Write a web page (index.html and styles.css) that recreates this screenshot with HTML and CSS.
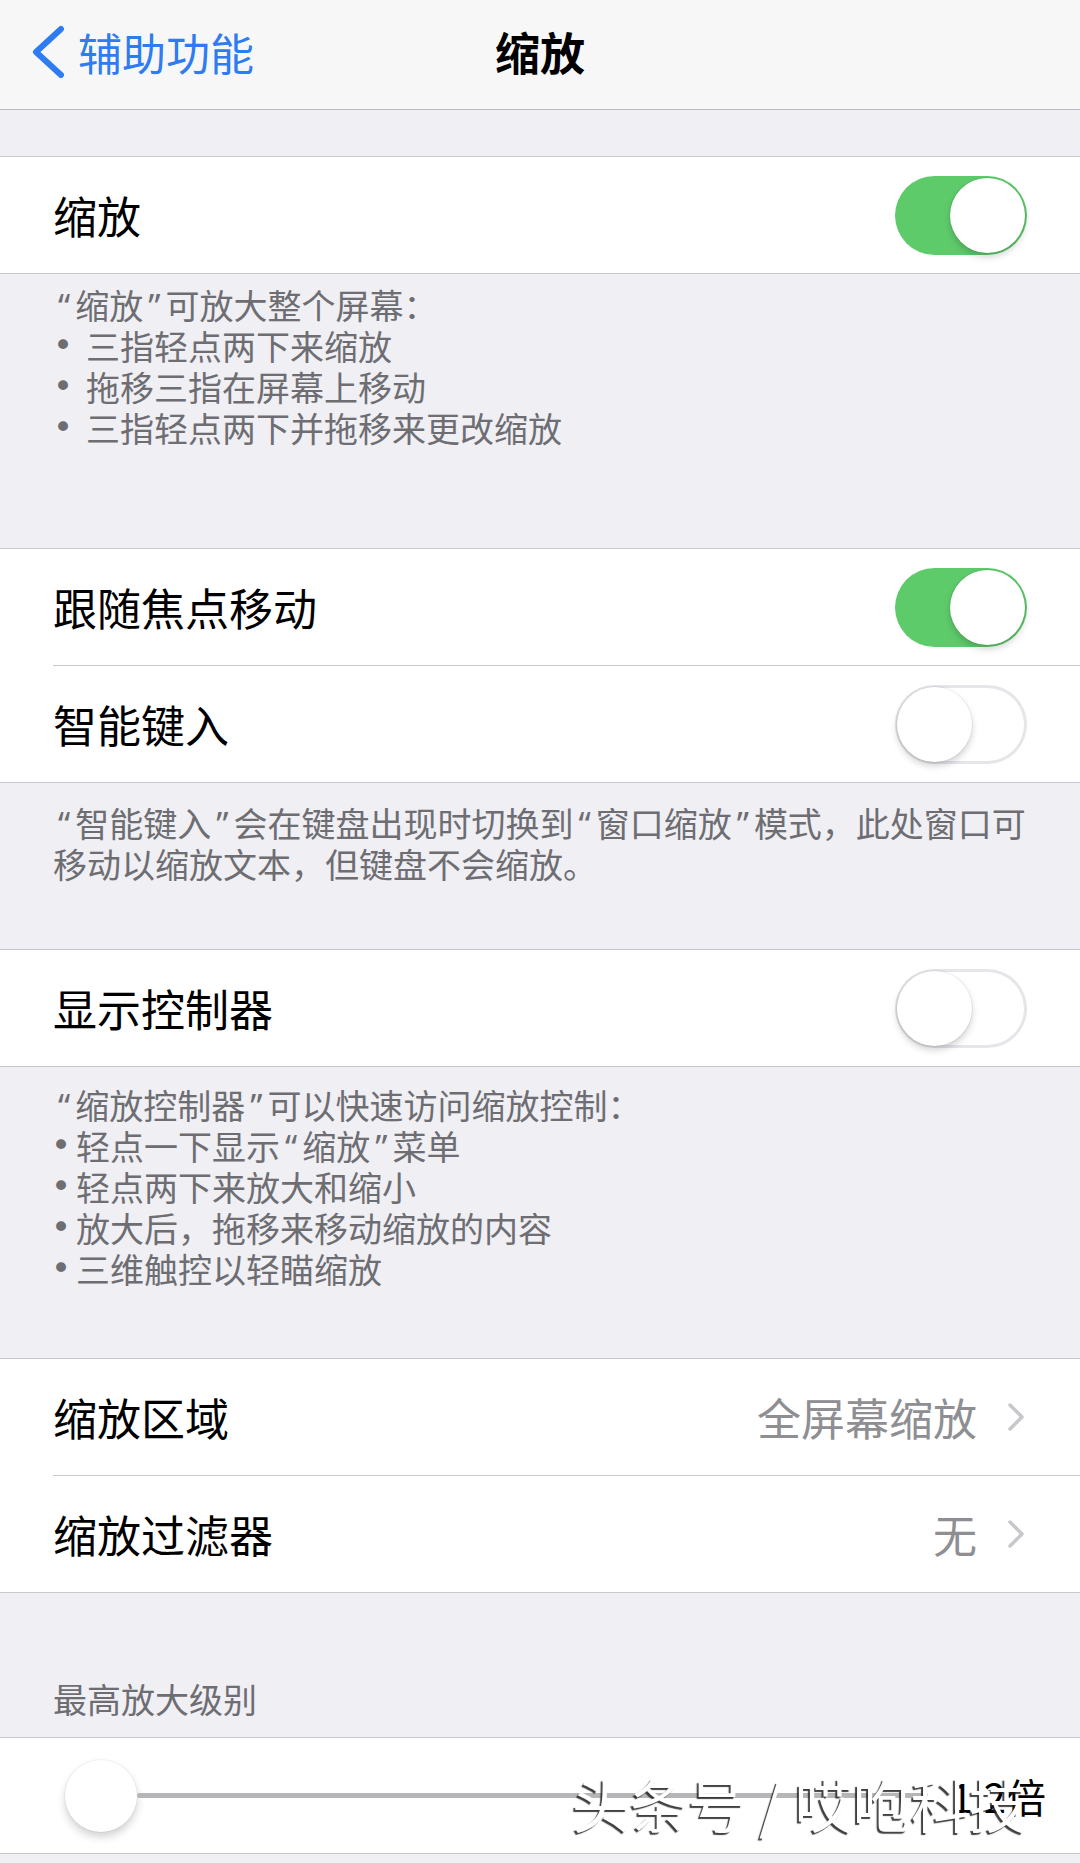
FILE: index.html
```html
<!DOCTYPE html>
<html lang="zh-CN">
<head>
<meta charset="utf-8">
<title>缩放</title>
<link rel="stylesheet" href="styles.css">
</head>
<body>
<div class="page">
  <header class="nav">
    <div class="nav-back">
      <svg viewBox="0 0 36 54" class="back-chevron"><polyline points="31,4 6,27 31,50" fill="none" stroke="#2f7cf2" stroke-width="6" stroke-linecap="round" stroke-linejoin="round"/></svg>
      <span>辅助功能</span>
    </div>
    <div class="nav-title">缩放</div>
    <div></div>
  </header>
  <div class="gap-top"></div>

  <section class="group">
    <div class="row"><span class="label">缩放</span><span class="toggle on"></span></div>
  </section>
  <div class="footer f1">
    <p><span class="q">“</span>缩放<span class="q">”</span>可放大整个屏幕：</p>
    <div class="bl wide"><span class="dot">•</span><span>三指轻点两下来缩放</span></div>
    <div class="bl wide"><span class="dot">•</span><span>拖移三指在屏幕上移动</span></div>
    <div class="bl wide"><span class="dot">•</span><span>三指轻点两下并拖移来更改缩放</span></div>
  </div>

  <section class="group">
    <div class="row"><span class="label">跟随焦点移动</span><span class="toggle on"></span></div>
    <div class="row"><span class="label">智能键入</span><span class="toggle off"></span></div>
  </section>
  <div class="footer f2">
    <p class="nowrap"><span class="q">“</span>智能键入<span class="q">”</span>会在键盘出现时切换到<span class="q">“</span>窗口缩放<span class="q">”</span>模式，此处窗口可<br>移动以缩放文本，但键盘不会缩放。</p>
  </div>

  <section class="group">
    <div class="row"><span class="label">显示控制器</span><span class="toggle off"></span></div>
  </section>
  <div class="footer f3">
    <p><span class="q">“</span>缩放控制器<span class="q">”</span>可以快速访问缩放控制：</p>
    <div class="bl narrow"><span class="dot">•</span><span>轻点一下显示<span class="q">“</span>缩放<span class="q">”</span>菜单</span></div>
    <div class="bl narrow"><span class="dot">•</span><span>轻点两下来放大和缩小</span></div>
    <div class="bl narrow"><span class="dot">•</span><span>放大后，拖移来移动缩放的内容</span></div>
    <div class="bl narrow"><span class="dot">•</span><span>三维触控以轻瞄缩放</span></div>
  </div>

  <section class="group">
    <div class="row">
      <span class="label">缩放区域</span>
      <span class="value">全屏幕缩放<svg class="chev" viewBox="0 0 18 30"><polyline points="3,3 15,15 3,27" fill="none" stroke="#c7c7cc" stroke-width="3.5" stroke-linecap="round" stroke-linejoin="round"/></svg></span>
    </div>
    <div class="row">
      <span class="label">缩放过滤器</span>
      <span class="value">无<svg class="chev" viewBox="0 0 18 30"><polyline points="3,3 15,15 3,27" fill="none" stroke="#c7c7cc" stroke-width="3.5" stroke-linecap="round" stroke-linejoin="round"/></svg></span>
    </div>
  </section>

  <div class="section-header">最高放大级别</div>
  <section class="group">
    <div class="row slider-row">
      <span class="thumb"></span>
      <span class="track"></span>
      <span class="slider-value">1.2倍</span>
    </div>
  </section>

  <div class="watermark">头条号 / 哎咆科技</div>
</div>
</body>
</html>
```

FILE: styles.css
```css
html, body {
  margin: 0;
  padding: 0;
}
body {
  background: #efeff4;
  font-family: "Noto Sans CJK SC", "Noto Sans", sans-serif;
}
.page {
  position: relative;
  width: 1080px;
  height: 1863px;
  overflow: hidden;
  background: #efeff4;
}

/* nav bar */
.nav {
  height: 109px;
  border-bottom: 1px solid #b9b9bd;
  background: #f7f7f8;
  display: grid;
  grid-template-columns: 1fr auto 1fr;
  align-items: center;
}
.nav-back {
  display: flex;
  align-items: center;
  gap: 12px;
  padding-left: 30px;
  color: #2f7cf2;
  font-size: 44px;
  line-height: 1;
  margin-top: -6px;
}
.back-chevron {
  width: 36px;
  height: 54px;
  flex: none;
}
.nav-title {
  font-size: 45px;
  font-weight: 600;
  color: #000;
  line-height: 1;
  margin-top: -6px;
}
.gap-top {
  height: 46px;
}

/* groups & rows */
.group {
  background: #fff;
  border-top: 1px solid #c8c7cc;
  border-bottom: 1px solid #c8c7cc;
  padding-left: 53px;
}
.row {
  height: 116px;
  display: flex;
  align-items: center;
  justify-content: space-between;
  padding-right: 53px;
}
.row + .row {
  border-top: 1px solid #c8c7cc;
}
.label {
  font-size: 44px;
  color: #000;
  line-height: 1;
}

/* switches */
.toggle {
  position: relative;
  width: 132px;
  height: 79px;
  border-radius: 40px;
  box-sizing: border-box;
  flex: none;
}
.toggle.on {
  background: #5ecb6b;
}
.toggle.off {
  background: #fff;
  box-shadow: inset 0 0 0 3px #e5e5ea;
}
.toggle::after {
  content: "";
  position: absolute;
  top: 2px;
  width: 75px;
  height: 75px;
  border-radius: 50%;
  background: #fff;
  box-shadow: 0 4px 7px rgba(0, 0, 0, 0.18), 0 0 0 1px rgba(0, 0, 0, 0.05);
}
.toggle.on::after {
  right: 2px;
}
.toggle.off::after {
  left: 2px;
}

/* value + chevron */
.value {
  display: flex;
  align-items: center;
  gap: 30px;
  color: #8e8e93;
  font-size: 44px;
  line-height: 1;
}
.chev {
  width: 18px;
  height: 30px;
  flex: none;
  margin-right: 2px;
}

/* footers */
.footer {
  padding-left: 53px;
  padding-right: 53px;
  font-size: 34px;
  line-height: 41px;
  color: #6d6d72;
}
.footer p {
  margin: 0;
}
.q {
  font-family: "Noto Sans", "DejaVu Sans", sans-serif;
  padding: 0 5px;
  line-height: 0;
}
.f1 {
  padding-top: 10px;
  padding-bottom: 100px;
}
.f2 {
  padding-top: 19px;
  padding-bottom: 65px;
}
.f3 {
  padding-top: 17px;
  padding-bottom: 69px;
}
.nowrap {
  white-space: nowrap;
}
.bl {
  display: flex;
  height: 41px;
}
.bl .dot {
  flex: none;
  font-family: "DejaVu Sans", "Noto Sans", sans-serif;
  font-size: 34px;
  line-height: 41px;
  height: 41px;
}
.bl.wide .dot {
  width: 33px;
}
.bl.narrow .dot {
  width: 23px;
  margin-left: -2px;
  padding-right: 2px;
}

.section-header {
  padding: 85px 53px 18px;
  font-size: 34px;
  line-height: 41px;
  color: #6d6d72;
}

/* slider */
.slider-row {
  height: 115px;
  justify-content: flex-start;
  padding-right: 34px;
}
.thumb {
  flex: none;
  width: 72px;
  height: 72px;
  margin-left: 12px;
  border-radius: 50%;
  background: #fff;
  box-shadow: 0 5px 9px rgba(0, 0, 0, 0.18), 0 0 0 1px rgba(0, 0, 0, 0.04);
}
.track {
  flex: 1;
  height: 5px;
  background: #b6b6b8;
  border-radius: 3px;
  margin-right: 22px;
}
.slider-value {
  flex: none;
  font-size: 40px;
  color: #000;
  line-height: 1;
}

/* watermark overlay */
.watermark {
  position: absolute;
  left: 572px;
  top: 1774px;
  font-size: 58px;
  line-height: 1;
  color: #fff;
  white-space: nowrap;
  text-shadow: -2px 2px 1px rgba(30, 30, 30, 0.85);
}
```
